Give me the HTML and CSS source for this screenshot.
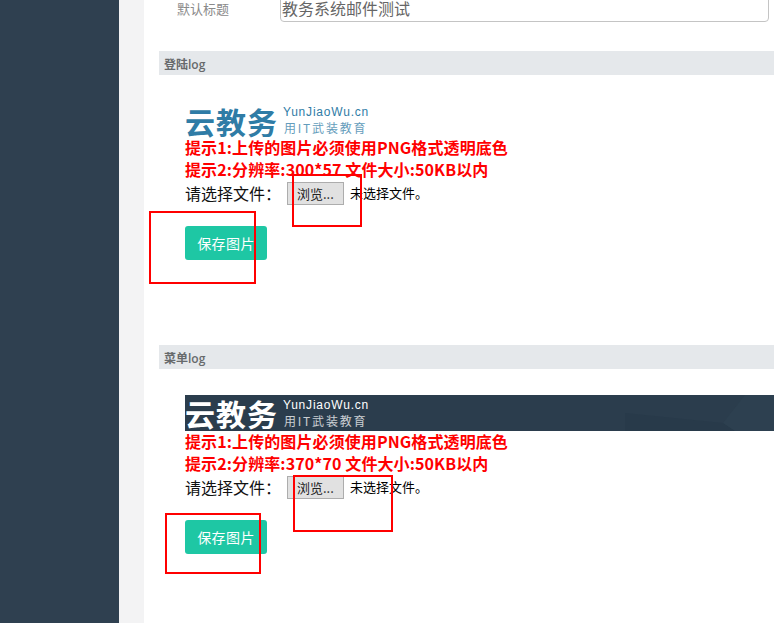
FILE: index.html
```html
<!DOCTYPE html>
<html lang="zh-CN">
<head>
<meta charset="utf-8">
<title>系统设置</title>
<link rel="stylesheet" href="styles.css">
</head>
<body>
<div class="app">
  <aside class="sidebar"></aside>
  <div class="gutter"></div>
  <main class="content">
    <div class="field-row">
      <span class="field-label">默认标题</span>
      <div class="field-clip"><input class="field-input" type="text" value="教务系统邮件测试"></div>
    </div>

    <section class="section section-login">
      <h3 class="section-title"><b>登陆</b>log</h3>
      <div class="section-body">
        <div class="logo logo-light">
          <span class="logo-main">云教务</span>
          <span class="logo-side"><span class="logo-url">YunJiaoWu.cn</span><span class="logo-slogan">用IT武装教育</span></span>
        </div>
        <p class="hint">提示1:上传的图片必须使用PNG格式透明底色</p>
        <p class="hint">提示2:分辨率:300*57 文件大小:50KB以内</p>
        <div class="file-row"><span class="file-label">请选择文件：</span><span class="file-btn">浏览...</span><span class="file-name">未选择文件。</span></div>
        <button class="save-btn" type="button">保存图片</button>
      </div>
    </section>

    <section class="section section-menu">
      <h3 class="section-title"><b>菜单</b>log</h3>
      <div class="section-body">
        <div class="logo logo-dark">
          <span class="logo-main">云教务</span>
          <span class="logo-side"><span class="logo-url">YunJiaoWu.cn</span><span class="logo-slogan">用IT武装教育</span></span>
        </div>
        <p class="hint">提示1:上传的图片必须使用PNG格式透明底色</p>
        <p class="hint">提示2:分辨率:370*70 文件大小:50KB以内</p>
        <div class="file-row"><span class="file-label">请选择文件：</span><span class="file-btn">浏览...</span><span class="file-name">未选择文件。</span></div>
        <button class="save-btn" type="button">保存图片</button>
      </div>
    </section>
  </main>
</div>
<div class="mark mark-1"></div>
<div class="mark mark-2"></div>
<div class="mark mark-3"></div>
<div class="mark mark-4"></div>
</body>
</html>
```
FILE: styles.css
```css
* { box-sizing: border-box; }
html, body { margin: 0; height: 100%; overflow: hidden; }
body {
  font-family: "Open Sans", "Noto Sans CJK SC", sans-serif;
  color: #000;
  background: #fff;
}
.app { display: flex; height: 623px; }
.sidebar { width: 119px; background: #2f4050; flex: none; }
.gutter { width: 25px; background: #f3f3f4; flex: none; }
.content { flex: 1; min-width: 0; padding-left: 15px; }

.field-row { display: flex; height: 51px; }
.field-label {
  width: 121px;
  padding-left: 18px;
  font-size: 13px;
  line-height: 17px;
  color: #8a8a8a;
  font-family: "Noto Sans CJK SC", sans-serif;
}
.field-clip { width: 489px; height: 22px; overflow: hidden; }
.field-input {
  display: block;
  width: 100%;
  height: 44px;
  margin-top: -22px;
  padding: 16px 1px 0 1px;
  border: 1px solid #c4c4c4;
  border-radius: 4px;
  font: 16px/20px "Noto Sans CJK SC", sans-serif;
  color: #666;
  background: #fff;
}

.section-title {
  margin: 0;
  height: 24px;
  padding-left: 5px;
  background: #e5e8eb;
  font-size: 12px;
  line-height: 26px;
  font-weight: 600;
  color: #676a6c;
}
.section-title b { font-family: "Noto Sans CJK SC", sans-serif; font-weight: 700; }
.section-body { padding-left: 26px; }
.section-login { height: 294px; }
.section-login .section-body { padding-top: 29px; }
.section-menu .section-body { padding-top: 26px; }

.logo { position: relative; display: flex; align-items: center; height: 36px; }
.logo-light { height: 33px; color: #2f7ca6; }
.logo-dark { color: #fff; background: #2b3d4d; }
.logo-dark::before,
.logo-dark::after { content: ""; position: absolute; inset: 0; }
.logo-dark::before { background: #283a4a; clip-path: polygon(440px 18px, 538px 28px, 550px 36px, 440px 36px); }
.logo-dark::after { background: #2d4050; clip-path: polygon(538px 28px, 560px 0, 589px 0, 589px 36px, 550px 36px); }
.logo-main {
  position: relative;
  z-index: 1;
  width: 98px;
  font: 700 30px/30px "Noto Sans CJK SC", sans-serif;
  letter-spacing: 1px;
  white-space: nowrap;
}
.logo-side { position: relative; z-index: 1; display: flex; flex-direction: column; }
.logo-url {
  font: 12px/15px "Liberation Sans", sans-serif;
  letter-spacing: 0.8px;
  white-space: nowrap;
}
.logo-slogan {
  font: 12px/16px "Noto Sans CJK SC", sans-serif;
  letter-spacing: 1.8px;
  white-space: nowrap;
  opacity: 0.75;
  margin-left: 1px;
}
.logo-light .logo-url { color: #2f7ca6; }

.hint {
  margin: 0;
  height: 22px;
  font: 700 16px/20px "Noto Sans CJK SC", sans-serif;
  letter-spacing: 0.1px;
  color: #f00;
  white-space: nowrap;
}

.file-row { display: flex; align-items: center; height: 24px; white-space: nowrap; }
.file-label {
  width: 102px;
  font: 16px/22px "Noto Sans CJK SC", sans-serif;
  color: #111;
}
.file-btn {
  display: block;
  width: 57px;
  height: 23px;
  margin-right: 6px;
  padding-left: 9px;
  border: 1px solid #adadad;
  background: #e1e1e1;
  font: 13px/22px "Noto Sans CJK SC", sans-serif;
  color: #222;
}
.file-name { font: 13px/24px "Noto Sans CJK SC", sans-serif; color: #000; }

.save-btn {
  display: block;
  width: 82px;
  height: 34px;
  margin-top: 21px;
  padding: 0;
  border: 0;
  border-radius: 3px;
  background: #1ec7a4;
  color: #fff;
  font: 14px/34px "Noto Sans CJK SC", sans-serif;
  letter-spacing: 0.4px;
  text-align: center;
}

.mark { position: absolute; border: 2px solid #f00; }
.mark-1 { left: 292px; top: 174px; width: 70px; height: 53px; }
.mark-2 { left: 149px; top: 211px; width: 107px; height: 73px; }
.mark-3 { left: 293px; top: 475px; width: 100px; height: 57px; }
.mark-4 { left: 165px; top: 513px; width: 96px; height: 61px; }
```
